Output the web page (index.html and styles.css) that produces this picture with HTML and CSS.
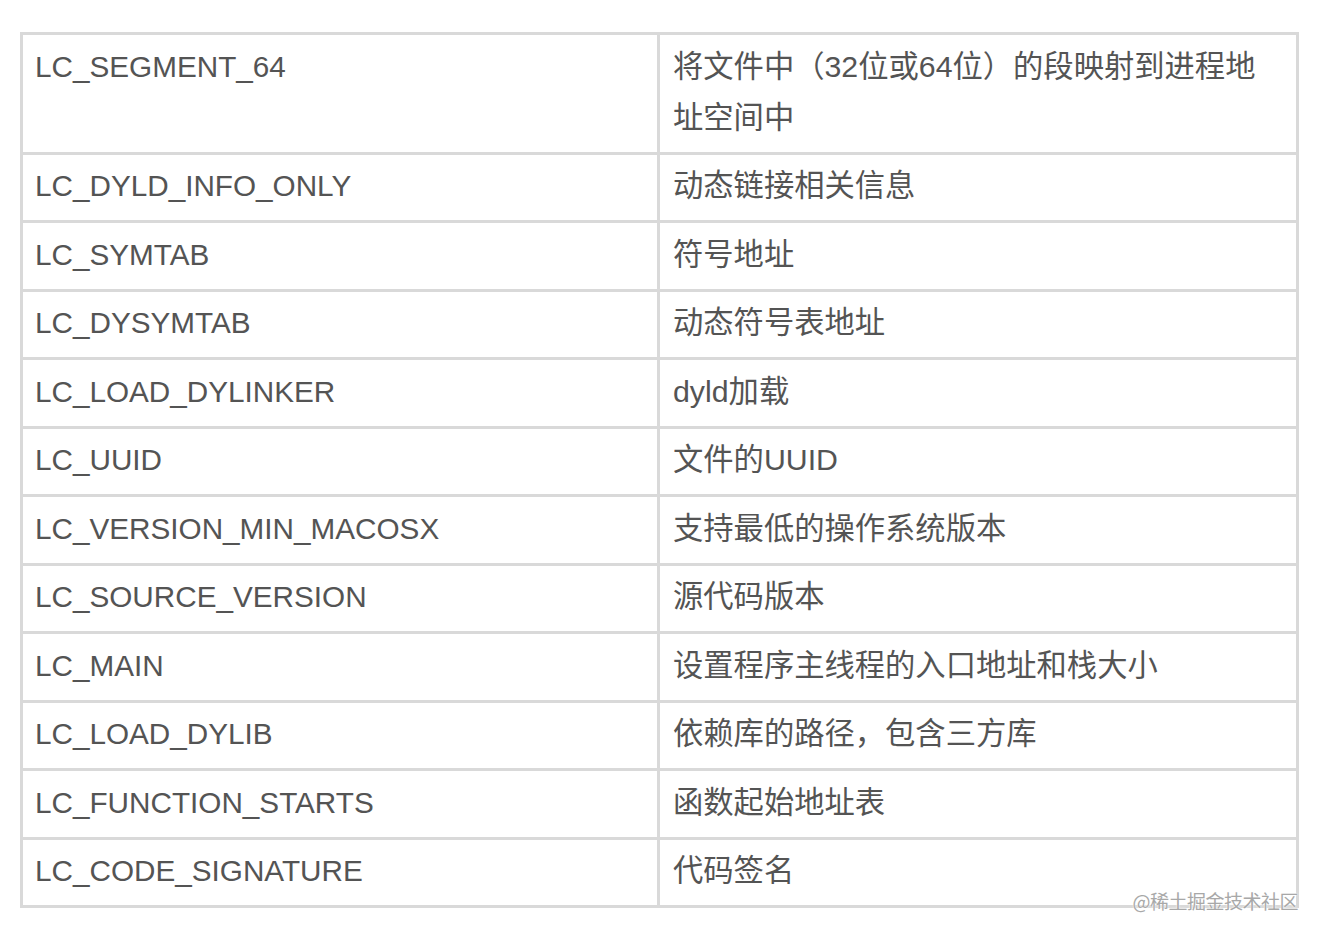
FILE: index.html
```html
<!DOCTYPE html>
<html lang="zh">
<head>
<meta charset="utf-8">
<link rel="stylesheet" href="styles.css">
</head>
<body>
<div class="wrap">
<table class="cmds">
<tr><td class="k">LC_SEGMENT_64</td><td class="v">将文件中（32位或64位）的段映射到进程地址空间中</td></tr>
<tr><td class="k">LC_DYLD_INFO_ONLY</td><td class="v">动态链接相关信息</td></tr>
<tr><td class="k">LC_SYMTAB</td><td class="v">符号地址</td></tr>
<tr><td class="k">LC_DYSYMTAB</td><td class="v">动态符号表地址</td></tr>
<tr><td class="k">LC_LOAD_DYLINKER</td><td class="v">dyld加载</td></tr>
<tr><td class="k">LC_UUID</td><td class="v">文件的UUID</td></tr>
<tr><td class="k">LC_VERSION_MIN_MACOSX</td><td class="v">支持最低的操作系统版本</td></tr>
<tr><td class="k">LC_SOURCE_VERSION</td><td class="v">源代码版本</td></tr>
<tr><td class="k">LC_MAIN</td><td class="v">设置程序主线程的入口地址和栈大小</td></tr>
<tr><td class="k">LC_LOAD_DYLIB</td><td class="v">依赖库的路径，包含三方库</td></tr>
<tr><td class="k">LC_FUNCTION_STARTS</td><td class="v">函数起始地址表</td></tr>
<tr><td class="k">LC_CODE_SIGNATURE</td><td class="v">代码签名</td></tr>
</table>
<div class="mark">@稀土掘金技术社区</div>
</div>
</body>
</html>
```
FILE: styles.css
```css
html, body {
  margin: 0;
  padding: 0;
  background: #ffffff;
}
.wrap {
  position: relative;
  width: 1322px;
  height: 938px;
  padding: 32px 0 0 20px;
  box-sizing: border-box;
}
.cmds {
  border-collapse: separate;
  border-spacing: 0;
  border-top: 3px solid #d9d9d9;
  border-left: 3px solid #d9d9d9;
  font-family: "Liberation Sans", "Noto Sans CJK SC", sans-serif;
  color: #545454;
  table-layout: fixed;
}
.cmds td {
  border-right: 3px solid #d9d9d9;
  border-bottom: 3px solid #d9d9d9;
  padding: 5.6px 12px 8.6px;
  line-height: 51.3px;
  vertical-align: top;
  box-sizing: border-box;
}
.cmds td.k {
  width: 637px;
  font-size: 29.7px;
}
.cmds td.v {
  width: 639px;
  font-size: 30.3px;
  padding-left: 13px;
  padding-right: 30px;
}
.mark {
  position: absolute;
  right: 24px;
  top: 888px;
  font-family: "Noto Sans CJK SC", sans-serif;
  font-size: 19px;
  line-height: 26px;
  color: #a8a8a8;
  letter-spacing: -0.5px;
  text-shadow: 0 0 2px #ffffff, 0 0 1px #ffffff;
}
```
